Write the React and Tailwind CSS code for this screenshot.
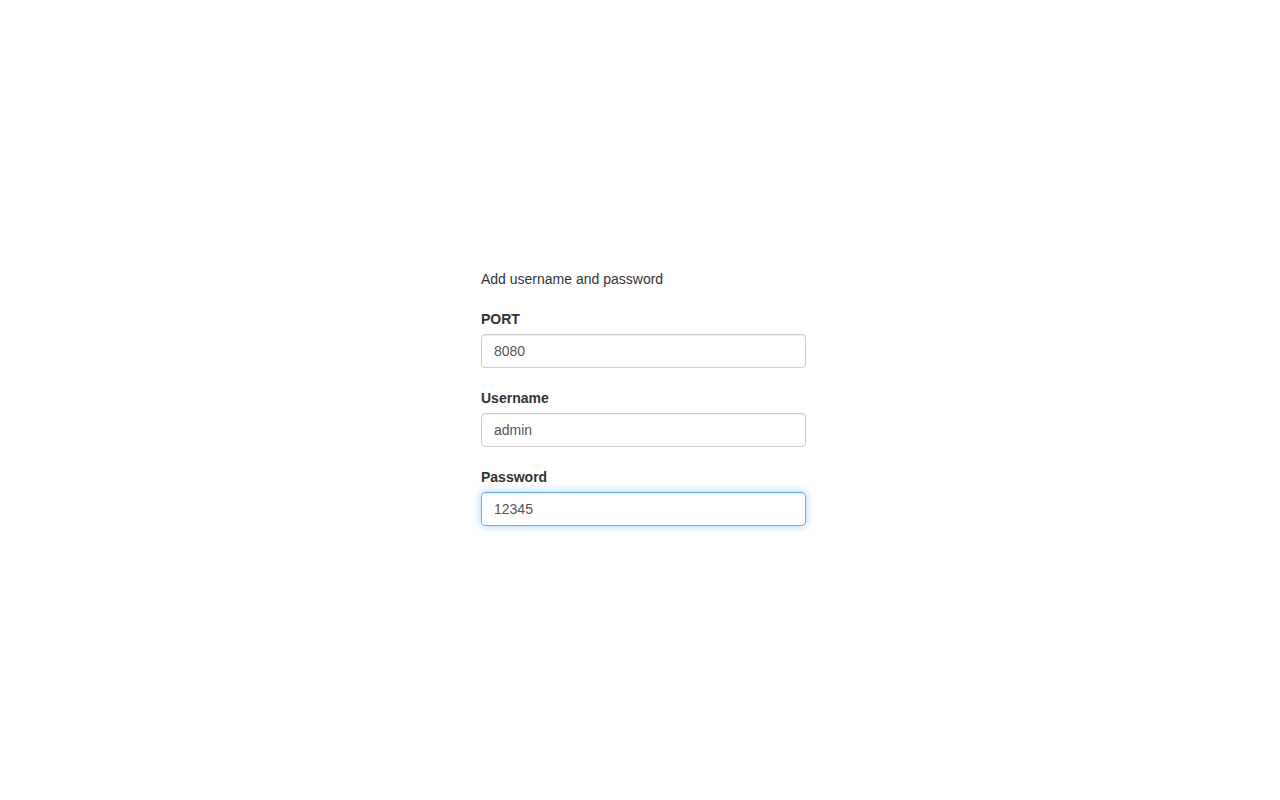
const fields = [
	{ label: 'PORT', value: '8080', focused: false },
	{ label: 'Username', value: 'admin', focused: false },
	{ label: 'Password', value: '12345', focused: true },
];

const App = () => {
	return (
		<div className="min-h-[800px] bg-white font-['Liberation_Sans',Arial,sans-serif] text-[14px] leading-[20px] text-[#333]">
			<div className="pt-[269px] pl-[481px]">
				<div className="w-[325px]">
					<p className="mb-[20px]">Add username and password</p>
					{fields.map((field, index) => {
						return (
							<div key={index} className="mb-[20px]">
								<label className="block mb-[5px] font-bold">{field.label}</label>
								<div
									className={
										field.focused
											? 'h-[34px] px-[12px] py-[6px] rounded-[4px] border border-[#66afe9] text-[#555] shadow-[inset_0_1px_1px_rgba(0,0,0,0.075),0_0_8px_rgba(102,175,233,0.6)]'
											: 'h-[34px] px-[12px] py-[6px] rounded-[4px] border border-[#ccc] text-[#555] shadow-[inset_0_1px_1px_rgba(0,0,0,0.075)]'
									}
								>
									{field.value}
								</div>
							</div>
						);
					})}
				</div>
			</div>
		</div>
	);
};
export default App;
